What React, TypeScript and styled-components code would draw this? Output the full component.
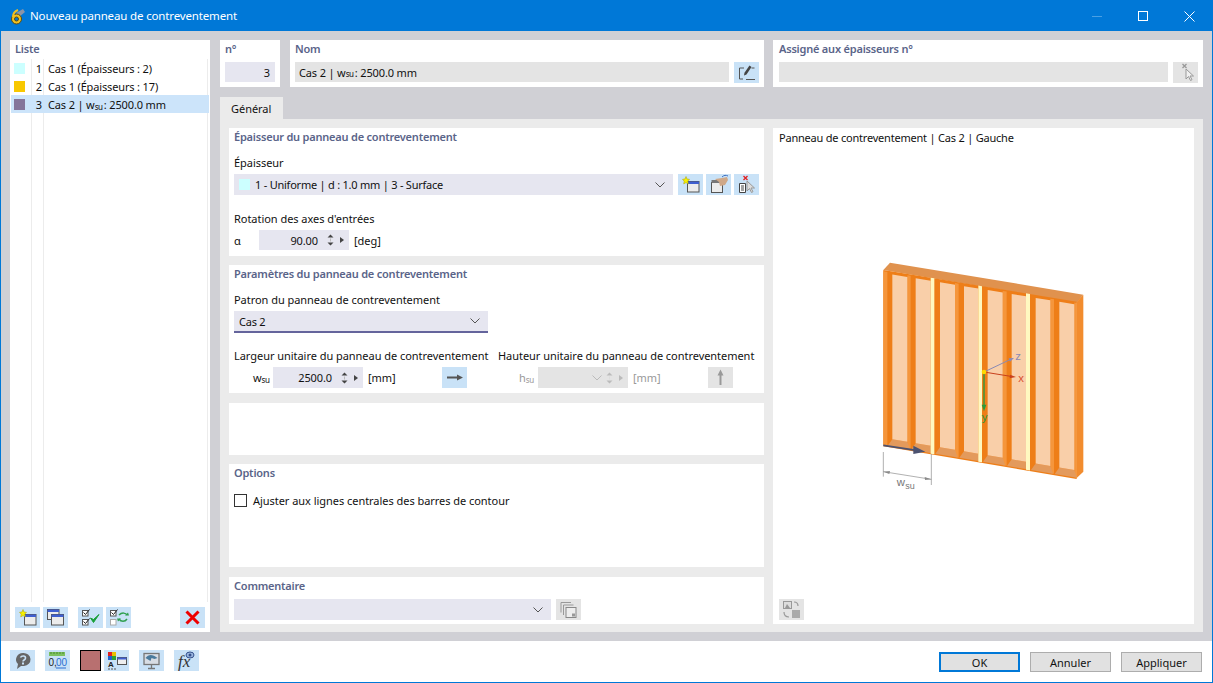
import React from "react";
import styled, { createGlobalStyle } from "styled-components";

const GlobalStyle = createGlobalStyle`
  html, body { margin: 0; padding: 0; background: #fff; }
  * { box-sizing: border-box; }
`;

const Win = styled.div`
  width: 1213px;
  height: 683px;
  border: 1px solid #0078d7;
  background: #d0d0d5;
  display: flex;
  flex-direction: column;
  font-family: "Noto Sans", "Open Sans", sans-serif;
  font-size: 11px;
  letter-spacing: -0.04px;
  color: #111;
  overflow: hidden;
`;

const TitleBar = styled.div`
  height: 30px;
  flex: none;
  background: #0078d7;
  color: #fff;
  display: flex;
  align-items: center;
  padding-left: 8px;
  font-size: 11.5px;
  letter-spacing: -0.15px;
`;

const TitleText = styled.span`
  margin-left: 4px;
  flex: 1;
  margin-top: -1px;
`;

const WinControl = styled.div`
  width: 46px;
  height: 30px;
  display: flex;
  align-items: center;
  justify-content: center;
`;

const Main = styled.div`
  flex: 1;
  display: flex;
  gap: 10px;
  padding: 9px 0 0 9px;
  min-height: 0;
`;

const Sidebar = styled.div`
  width: 200px;
  height: 592px;
  background: #fff;
  display: flex;
  flex-direction: column;
`;

const Heading = styled.div<{ $muted?: boolean }>`
  height: 18px;
  line-height: 18px;
  font-weight: 600;
  font-size: 11px;
  letter-spacing: -0.21px;
  color: #5a6489;
  padding-left: ${(p) => (p.$muted ? 0 : 5)}px;
  white-space: nowrap;
`;

const List = styled.div`
  margin-top: 1px;
  height: 543px;
  background:
    linear-gradient(#ececec, #ececec) 21px 0 / 1px 100% no-repeat,
    linear-gradient(#ececec, #ececec) 33px 0 / 1px 100% no-repeat,
    linear-gradient(#ececec, #ececec) 197px 0 / 1px 100% no-repeat;
`;

const Row = styled.div<{ $active?: boolean }>`
  height: 18px;
  width: 198px;
  margin-left: 1px;
  display: flex;
  align-items: center;
  letter-spacing: -0.15px;
  background: ${(p) => (p.$active ? "#cce4fa" : "transparent")};
  white-space: nowrap;
`;

const RowSwatch = styled.span<{ $color: string }>`
  width: 11px;
  height: 11px;
  margin-left: 3px;
  background: ${(p) => p.$color};
`;

const RowNum = styled.span`
  width: 17px;
  text-align: right;
  flex: none;
`;

const RowName = styled.span`
  margin-left: 6px;
`;

const Sub = styled.span`
  font-size: 8px;
  letter-spacing: -0.4px;
  margin-right: -1.5px;
  position: relative;
  top: 1px;
`;

const SideTools = styled.div`
  margin-top: 5px;
  display: flex;
  padding-left: 5px;
`;

const IconBtn = styled.button<{ $off?: boolean; $ml?: number }>`
  width: 25px;
  height: 21px;
  flex: none;
  padding: 0;
  border: 0;
  margin-left: ${(p) => p.$ml ?? 0}px;
  background: ${(p) => (p.$off ? "#e4e4e4" : "#c9e2f7")};
  display: flex;
  align-items: center;
  justify-content: center;
`;

const Content = styled.div`
  width: 983px;
  display: flex;
  flex-direction: column;
`;

const TopRow = styled.div`
  display: flex;
  height: 47px;
`;

const TopCard = styled.div<{ $w: number; $ml: number; $pl?: number }>`
  width: ${(p) => p.$w}px;
  margin-left: ${(p) => p.$ml}px;
  background: #fff;
  padding: 0 5px 0 ${(p) => p.$pl ?? 5}px;
`;

const InputRow = styled.div<{ $mt?: number }>`
  display: flex;
  align-items: center;
  margin-top: ${(p) => p.$mt ?? 4}px;
`;

const Field = styled.div<{ $w?: number; $off?: boolean; $right?: boolean }>`
  width: ${(p) => (p.$w ? `${p.$w}px` : "auto")};
  flex: ${(p) => (p.$w ? "none" : 1)};
  align-self: flex-start;
  height: 20px;
  background: ${(p) => (p.$off ? "#e4e4e4" : "#e6e6f0")};
  display: flex;
  align-items: center;
  justify-content: ${(p) => (p.$right ? "flex-end" : "flex-start")};
  padding: 0 5px 0 4px;
  letter-spacing: -0.15px;
  white-space: pre;
`;

const Tab = styled.div`
  margin-top: 10px;
  width: 63px;
  height: 22px;
  background: #ebebeb;
  padding-left: 11px;
  line-height: 23px;
`;

const TabPanel = styled.div`
  height: 513px;
  background: #ebebeb;
  padding: 9px 9px 8px;
  display: flex;
  gap: 9px;
`;

const LeftCol = styled.div`
  width: 535px;
  display: flex;
  flex-direction: column;
`;

const Section = styled.div<{ $h: number; $mt?: number }>`
  height: ${(p) => p.$h}px;
  margin-top: ${(p) => p.$mt ?? 0}px;
  background: #fff;
  padding: 0 5px;
  flex: none;
`;

const Label = styled.div<{ $mt: number }>`
  height: 18px;
  line-height: 18px;
  margin-top: ${(p) => p.$mt}px;
  white-space: nowrap;
`;

const ToolGroup = styled.div`
  display: flex;
  gap: 3px;
  margin-left: 5px;
`;

const SelectBox = styled.div<{ $w?: number; $underline?: boolean }>`
  width: ${(p) => (p.$w ? `${p.$w}px` : "auto")};
  flex: ${(p) => (p.$w ? "none" : 1)};
  height: ${(p) => (p.$underline ? 22 : 21)}px;
  background: #e6e6f0;
  display: flex;
  align-items: center;
  padding: 0 8px 0 5px;
  letter-spacing: -0.23px;
  border-bottom: ${(p) => (p.$underline ? "2px solid #64649c" : "0")};
`;

const Swatch = styled.span`
  width: 11px;
  height: 11px;
  background: #ccffff;
  margin-right: 5px;
`;

const Grow = styled.span`
  flex: 1;
`;

const Symbol = styled.span<{ $w: number; $off?: boolean; $pl?: number }>`
  width: ${(p) => p.$w}px;
  padding-left: ${(p) => p.$pl ?? 0}px;
  flex: none;
  color: ${(p) => (p.$off ? "#999" : "#111")};
`;

const Spin = styled.div<{ $w: number; $off?: boolean; $h?: number }>`
  width: ${(p) => p.$w}px;
  height: ${(p) => p.$h ?? 20}px;
  flex: none;
  background: ${(p) => (p.$off ? "#e4e4e4" : "#e6e6f0")};
  display: flex;
  align-items: center;
  justify-content: flex-end;
`;

const SpinValue = styled.span`
  margin-right: 5px;
  letter-spacing: -0.1px;
`;

const Unit = styled.span<{ $off?: boolean }>`
  margin-left: 5px;
  color: ${(p) => (p.$off ? "#999" : "#111")};
`;

const DimCols = styled.div`
  display: flex;
  margin-top: 14px;
`;

const DimCol = styled.div<{ $w: number }>`
  width: ${(p) => p.$w}px;
  flex: none;
`;

const CheckRow = styled.label`
  display: flex;
  align-items: center;
  height: 20px;
  margin-top: 8px;
`;

const CheckBox = styled.span`
  width: 13px;
  height: 13px;
  border: 1px solid #333;
  background: #fff;
  margin: 1px 6px 0 0;
`;

const Preview = styled.div`
  width: 421px;
  height: 496px;
  background: #fff;
  display: flex;
  flex-direction: column;
  padding: 1px 6px 4px;
`;

const PreviewTitle = styled.div`
  height: 18px;
  line-height: 18px;
  letter-spacing: -0.21px;
`;

const Drawing = styled.svg`
  display: block;
  margin: 103px 0 0 81px;
  flex: none;
`;

const PreviewTools = styled.div`
  margin-top: auto;
`;

const Footer = styled.div`
  height: 41px;
  margin-top: 9px;
  flex: none;
  background: #fff;
  display: flex;
  align-items: flex-start;
  padding: 9px 10px 0 9px;
`;

const ColorChip = styled.div`
  width: 21px;
  height: 21px;
  margin-left: 10px;
  border: 1px solid #000;
  background: #b87070;
`;

const DlgBtn = styled.button<{ $primary?: boolean }>`
  width: 81px;
  height: 20px;
  margin: 2px 0 0 10px;
  padding: 0;
  background: #e1e1e1;
  border: ${(p) => (p.$primary ? "2px solid #0078d7" : "1px solid #adadad")};
  font: inherit;
  color: #111;
`;

const Chevron = ({ off }: { off?: boolean }) => (
  <svg width="10" height="6" viewBox="0 0 10 6">
    <path d="M.5.5 5 5 9.500.5" fill="none" stroke={off ? "#bbb" : "#555"} />
  </svg>
);

const Stepper = ({ off }: { off?: boolean }) => {
  const c = off ? "#bbb" : "#444";
  return (
    <svg width="26" height="16" viewBox="0 0 26 16">
      <path d="M4.500 5.500 7.500 2.500 10.500 5.500z M4.500 10.500h6L7.500 13.500z" fill={c} />
      <path d="M7.500 6.500v3" stroke={off ? "#ddd" : "#bbb"} />
      <path d="M17 5 21 8 17 11z" fill={c} />
    </svg>
  );
};

const Win1 = ({ x, y, w, h }: { x: number; y: number; w: number; h: number }) => (
  <g>
    <rect x={x} y={y} width={w} height={h} fill="#ececec" stroke="#555" />
    <rect x={x} y={y} width={w} height={2.500} fill="#3f5fd0" />
  </g>
);

const NewIcon = () => (
  <svg width="25" height="21" viewBox="0 0 25 21">
    <Win1 x={9.500} y={7.500} w={11.500} h={10.500} />
    <path d="M8 2.500l1 2.500 2.500.3L9.800 7.200l.5 2.700L8 8.600 5.700 9.900l.5-2.700-1.700-1.900L7 5z" fill="#f6f000" stroke="#a89c00" strokeWidth=".5" />
  </svg>
);

const CopyIcon = () => (
  <svg width="25" height="21" viewBox="0 0 25 21">
    <Win1 x={4.500} y={2.500} w={11.500} h={10} />
    <Win1 x={8.500} y={7.500} w={12} h={10.500} />
  </svg>
);

const Tick = ({ x, y, on }: { x: number; y: number; on: boolean }) => (
  <g>
    <rect x={x} y={y} width={5.500} height={5.500} fill="#fff" stroke={on ? "#555" : "#aaa"} />
    {on && <path d={`M${x + 1} ${y + 2}l2 2 4-5`} fill="none" stroke="#222" />}
  </g>
);

const CheckAllIcon = () => (
  <svg width="25" height="21" viewBox="0 0 25 21">
    <Tick x={4.500} y={3.500} on />
    <Tick x={4.500} y={12.500} on />
    <path d="M12.500 11l3 4.500 5.500-8-5.500 5z" fill="#18a038" stroke="#18a038" />
  </svg>
);

const CheckSwapIcon = () => (
  <svg width="25" height="21" viewBox="0 0 25 21">
    <Tick x={4.500} y={3.500} on />
    <Tick x={4.500} y={12.500} on={false} />
    <path d="M13 8c3-3 7-2 8 0M21 12c-2 3-6 3-8 0" fill="none" stroke="#30a050" strokeWidth="1.500" />
    <path d="M19 8.500h4l-1-3zM15 11.500h-4l1 3z" fill="#30a050" />
  </svg>
);

const RedX = () => (
  <svg width="25" height="21" viewBox="0 0 25 21">
    <path d="M6.500 4.500 18.500 16.500M18.500 4.500 6.500 16.500" stroke="#ee0000" strokeWidth="3" />
  </svg>
);

const EditIcon = () => (
  <svg width="25" height="21" viewBox="0 0 25 21">
    <path d="M10 6H5.500v11H9M12 17.500h9M17.500 6h3" fill="none" stroke="#555" />
    <path d="M15.500 3.500 17.500 5l-5 7.500-2.500 1 .5-2.800z" fill="#444" />
  </svg>
);

const CursorX = ({ doc }: { doc?: boolean }) => (
  <svg width="25" height="21" viewBox="0 0 25 21">
    {doc && <path d="M5.500 9.500h6v9h-6zM7 12h3M7 14h3M7 16h3" fill="#fff" stroke="#444" />}
    <path d="M13 7v10l2.500-2.500 2 4 1.500-.8-2-3.700h3.500z" fill={doc ? "#ddd" : "#f0f0f0"} stroke="#999" />
    <path d="M9.500 2l4 4M13.500 2l-4 4" stroke={doc ? "#e02020" : "#999"} strokeWidth="1.300" />
  </svg>
);

const HandIcon = () => (
  <svg width="25" height="21" viewBox="0 0 25 21">
    <rect x="5.500" y="8.500" width="11" height="10" fill="#ececec" stroke="#555" />
    <rect x="5.500" y="6" width="11" height="3" fill="#777" />
    <path d="M9 5l7-1 5-1 1 3-3 5-5 1-1-4z" fill="#cfa888" />
    <path d="M16 3c2-2 4-2 6-1" fill="none" stroke="#3f70c0" />
  </svg>
);

const ArrowRight = () => (
  <svg width="25" height="21" viewBox="0 0 25 21">
    <path d="M5 9.500h10V7.500l6 3-6 3v-2H5z" fill="#555" />
  </svg>
);

const ArrowUp = () => (
  <svg width="25" height="21" viewBox="0 0 25 21">
    <path d="M11.500 18V8.500h-2l3-6 3 6h-2V18z" fill="#999" />
  </svg>
);

const GreyCopy = () => (
  <svg width="25" height="21" viewBox="0 0 25 21">
    <path d="M5 3.500h10M5 3.500v10M7.500 6h10M7.500 6v10" fill="none" stroke="#999" />
    <rect x="10" y="8.500" width="10" height="10" fill="#eee" stroke="#888" />
    <rect x="16" y="14.500" width="3" height="3" fill="#999" />
  </svg>
);

const SwapView = () => (
  <svg width="25" height="21" viewBox="0 0 25 21">
    <rect x="4.500" y="2.500" width="8" height="7" fill="#ddd" stroke="#999" />
    <path d="M6 9l2-4 3 4z" fill="#999" />
    <rect x="13" y="11" width="8" height="8" fill="#aaa" />
    <path d="M15 3c2 0 4 1 4 4M5 13c0 3 2 5 5 5" fill="none" stroke="#999" strokeWidth="1.200" />
  </svg>
);

const HelpIcon = () => (
  <svg width="25" height="21" viewBox="0 0 25 21">
    <path d="M13 3a7 6.500 0 0 1 1 13H11l-4 3 1-5a7 6.500 0 0 1 5-11z" fill="#666" />
    <path d="M10.500 7.500c1-2 5-2 5 .5 0 2-2.500 2-2.500 3.500" fill="none" stroke="#c9e2f7" strokeWidth="1.600" />
    <rect x="12" y="12.500" width="2" height="2" fill="#c9e2f7" />
  </svg>
);

const DecimalIcon = () => (
  <svg width="25" height="21" viewBox="0 0 25 21">
    <rect x="4" y="2" width="16" height="4" fill="#7cc060" />
    <path d="M6 2v2M9 2v2M12 2v2M15 2v2M18 2v2" stroke="#4a8a30" />
    <text x="3.500" y="16" fontFamily="Liberation Sans, sans-serif" fontSize="10" fill="#222">0,</text>
    <text x="11" y="16" fontFamily="Liberation Sans, sans-serif" fontSize="10" fill="#2a6fd0">00</text>
    <path d="M11 18h10" stroke="#2a6fd0" />
  </svg>
);

const ColorsIcon = () => (
  <svg width="25" height="21" viewBox="0 0 25 21">
    <rect x="4" y="2" width="4" height="4" fill="#e02020" />
    <rect x="8" y="2" width="4" height="4" fill="#e8c000" />
    <rect x="4" y="6" width="4" height="4" fill="#2060d0" />
    <rect x="8" y="6" width="4" height="4" fill="#30a030" />
    <text x="4" y="17" fontFamily="Liberation Sans, sans-serif" fontWeight="700" fontSize="8" fill="#222">A</text>
    <path d="M4 19h9" stroke="#555" strokeDasharray="2 1" />
    <rect x="13.500" y="7.500" width="9" height="7" fill="#eee" stroke="#555" />
    <rect x="13.500" y="7.500" width="9" height="2" fill="#3f5fd0" />
  </svg>
);

const MonitorIcon = () => (
  <svg width="25" height="21" viewBox="0 0 25 21">
    <rect x="5" y="3.500" width="15" height="11" fill="#d8dde4" stroke="#777" strokeWidth="1.300" />
    <path d="M6.500 8c3-4 7-4 12 0l-3 1-3-1-1 3z" fill="#4a7a9c" />
    <path d="M12.500 15v3M9 18.500h7" stroke="#777" strokeWidth="1.300" />
  </svg>
);

const FxIcon = () => (
  <svg width="25" height="21" viewBox="0 0 25 21">
    <text x="4" y="17" fontFamily="Liberation Serif, serif" fontStyle="italic" fontSize="17" fill="#333">fx</text>
    <ellipse cx="16" cy="5" rx="4" ry="3" fill="#9cb8e0" stroke="#34508c" />
    <circle cx="16" cy="5" r="1.500" fill="#34508c" />
  </svg>
);

const AppLogo = () => (
  <svg width="17" height="17" viewBox="0 0 17 17">
    <path d="M7 5 14 1l2 3-6 5z" fill="#8a94a8" />
    <circle cx="7.500" cy="11" r="5" fill="#f0c020" stroke="#5a4a10" />
    <circle cx="7.500" cy="11" r="2" fill="#0078d7" stroke="#5a4a10" />
    <path d="M4 9c0-4 2-6 5-7" fill="none" stroke="#f0c020" strokeWidth="2" />
  </svg>
);

// wall drawing, in 3x coordinates of the crop
const topY = (x: number) => 60 + (x - 70) * 0.1638;
const botY = (x: number) => 585 + (x - 70) * 0.169;
const band = (a: number, b: number, t = 0, u = 0) =>
  `${a},${topY(a) + t} ${b},${topY(b) + t} ${b},${botY(b) - u} ${a},${botY(a) - u}`;

const panes = [
  [97, 142], [167, 212], [240, 285], [312, 355], [383, 428],
  [455, 498], [527, 571], [598, 643],
];
const lights = [[70, 82], [142, 152], [285, 296], [428, 440], [571, 582], [643, 650]];
const creams = [[212, 223], [355, 366], [498, 510]];

const Wall = () => (
  <Drawing width="240" height="250" viewBox="0 0 720 750">
    <polygon points="70,60 90,38 670,134 650,158" fill="#e0924e" />
    <polygon points="650,156 670,134 670,665 650,684" fill="#f28c2e" />
    <polygon points={band(70, 650, 0, -4)} fill="#ee7e18" />
    {lights.map(([a, b]) => (
      <polygon key={a} points={band(a, b, 4)} fill="#f5963c" />
    ))}
    {panes.map(([a, b]) => (
      <g key={a}>
        <polygon
          points={`${a},${botY(a) - 22} ${b},${botY(b) - 22} ${b + 8},${botY(b + 8)} ${a - 14},${botY(a - 14)}`}
          fill="#e39a5c"
        />
        <polygon points={band(a, b, 9, 22)} fill="#f9cfa9" />
      </g>
    ))}
    {creams.map(([a, b]) => (
      <polygon key={a} points={band(a, b, 0, -2)} fill="#fff8c0" />
    ))}
    <path d="M372 366 452 328" stroke="#8a8ab4" strokeWidth="3" />
    <polygon points="462,324 446,325 450,335" fill="#8a8ab4" />
    <path d="M372 366 452 379" stroke="#c8401c" strokeWidth="3" />
    <polygon points="468,381 450,374 449,385" fill="#c8401c" />
    <path d="M372 366V466" stroke="#2a9a3c" strokeWidth="4" />
    <polygon points="372,484 365,464 379,464" fill="#2a9a3c" />
    <circle cx="372" cy="366" r="7" fill="#ffd800" />
    <text x="466" y="330" fontFamily="Liberation Sans, sans-serif" fontSize="34" fill="#8a8ab4">z</text>
    <text x="475" y="396" fontFamily="Liberation Sans, sans-serif" fontSize="34" fill="#d85030">x</text>
    <text x="365" y="514" fontFamily="Liberation Sans, sans-serif" fontSize="34" fill="#2a9a3c">y</text>
    <path d="M70 586 170 601" stroke="#4c5270" strokeWidth="5" />
    <polygon points="196,605 160,587 160,612" fill="#4c5270" />
    <path d="M70 606V680M214 612V705M70 665 214 688" stroke="#8a8a8a" strokeWidth="2" fill="none" />
    <polygon points="70,665 90,663 88,672" fill="#8a8a8a" />
    <polygon points="214,688 194,681 195,690" fill="#8a8a8a" />
    <text x="110" y="708" fontFamily="Liberation Sans, sans-serif" fontSize="34" fill="#777">w</text>
    <text x="136" y="716" fontFamily="Liberation Sans, sans-serif" fontSize="27" fill="#777">su</text>
  </Drawing>
);

export default function App() {
  return (
    <>
      <GlobalStyle />
      <Win>
        <TitleBar>
          <AppLogo />
          <TitleText>Nouveau panneau de contreventement</TitleText>
          <WinControl>
            <svg width="10" height="1"><path d="M0 .5h10" stroke="#4aa0e4" /></svg>
          </WinControl>
          <WinControl>
            <svg width="10" height="10"><rect x=".5" y=".5" width="9" height="9" fill="none" stroke="#fff" /></svg>
          </WinControl>
          <WinControl>
            <svg width="11" height="11"><path d="M.5.5l10 10M10.500.5l-10 10" stroke="#fff" /></svg>
          </WinControl>
        </TitleBar>

        <Main>
          <Sidebar>
            <Heading>Liste</Heading>
            <List>
              <Row>
                <RowSwatch $color="#ccffff" />
                <RowNum>1</RowNum>
                <RowName>Cas 1 (Épaisseurs : 2)</RowName>
              </Row>
              <Row>
                <RowSwatch $color="#f8c800" />
                <RowNum>2</RowNum>
                <RowName>Cas 1 (Épaisseurs : 17)</RowName>
              </Row>
              <Row $active>
                <RowSwatch $color="#85759a" />
                <RowNum>3</RowNum>
                <RowName>Cas 2 | w<Sub>su</Sub> : 2500.0 mm</RowName>
              </Row>
            </List>
            <SideTools>
              <IconBtn><NewIcon /></IconBtn>
              <IconBtn $ml={3}><CopyIcon /></IconBtn>
              <IconBtn $ml={10}><CheckAllIcon /></IconBtn>
              <IconBtn $ml={3}><CheckSwapIcon /></IconBtn>
              <IconBtn $ml={49}><RedX /></IconBtn>
            </SideTools>
          </Sidebar>

          <Content>
            <TopRow>
              <TopCard $w={60} $ml={0}>
                <Heading $muted>n°</Heading>
                <InputRow>
                  <Field $w={50} $right>3</Field>
                </InputRow>
              </TopCard>
              <TopCard $w={474} $ml={10}>
                <Heading $muted>Nom</Heading>
                <InputRow>
                  <Field $off>Cas 2 | w<Sub>su</Sub> : 2500.0 mm</Field>
                  <IconBtn $ml={5}><EditIcon /></IconBtn>
                </InputRow>
              </TopCard>
              <TopCard $w={430} $ml={9} $pl={6}>
                <Heading $muted>Assigné aux épaisseurs n°</Heading>
                <InputRow>
                  <Field $off />
                  <IconBtn $off $ml={5}><CursorX /></IconBtn>
                </InputRow>
              </TopCard>
            </TopRow>

            <Tab>Général</Tab>
            <TabPanel>
              <LeftCol>
                <Section $h={128}>
                  <Heading $muted>Épaisseur du panneau de contreventement</Heading>
                  <Label $mt={8}>Épaisseur</Label>
                  <InputRow $mt={2}>
                    <SelectBox>
                      <Swatch />
                      1 - Uniforme | d : 1.0 mm | 3 - Surface
                      <Grow />
                      <Chevron />
                    </SelectBox>
                    <ToolGroup>
                      <IconBtn><NewIcon /></IconBtn>
                      <IconBtn><HandIcon /></IconBtn>
                      <IconBtn><CursorX doc /></IconBtn>
                    </ToolGroup>
                  </InputRow>
                  <Label $mt={15}>Rotation des axes d'entrées</Label>
                  <InputRow $mt={2}>
                    <Symbol $w={25}>α</Symbol>
                    <Spin $w={90}>
                      <SpinValue>90.00</SpinValue>
                      <Stepper />
                    </Spin>
                    <Unit>[deg]</Unit>
                  </InputRow>
                </Section>

                <Section $h={128} $mt={9}>
                  <Heading $muted>Paramètres du panneau de contreventement</Heading>
                  <Label $mt={8}>Patron du panneau de contreventement</Label>
                  <InputRow $mt={2}>
                    <SelectBox $w={254} $underline>
                      Cas 2
                      <Grow />
                      <Chevron />
                    </SelectBox>
                  </InputRow>
                  <DimCols>
                    <DimCol $w={264}>
                      <Label $mt={0}>Largeur unitaire du panneau de contreventement</Label>
                      <InputRow $mt={2}>
                        <Symbol $w={39} $pl={19}>w<Sub>su</Sub></Symbol>
                        <Spin $w={90} $h={21}>
                          <SpinValue>2500.0</SpinValue>
                          <Stepper />
                        </Spin>
                        <Unit>[mm]</Unit>
                        <IconBtn $ml={46}><ArrowRight /></IconBtn>
                      </InputRow>
                    </DimCol>
                    <DimCol $w={260}>
                      <Label $mt={0}>Hauteur unitaire du panneau de contreventement</Label>
                      <InputRow $mt={2}>
                        <Symbol $w={40} $pl={21} $off>h<Sub>su</Sub></Symbol>
                        <Spin $w={90} $h={21} $off>
                          <Chevron off />
                          <Stepper off />
                        </Spin>
                        <Unit $off>[mm]</Unit>
                        <IconBtn $off $ml={47}><ArrowUp /></IconBtn>
                      </InputRow>
                    </DimCol>
                  </DimCols>
                </Section>

                <Section $h={52} $mt={10} />

                <Section $h={103} $mt={9}>
                  <Heading $muted>Options</Heading>
                  <CheckRow>
                    <CheckBox />
                    Ajuster aux lignes centrales des barres de contour
                  </CheckRow>
                </Section>

                <Section $h={47} $mt={10}>
                  <Heading $muted>Commentaire</Heading>
                  <InputRow>
                    <SelectBox $w={317}>
                      <Grow />
                      <Chevron />
                    </SelectBox>
                    <IconBtn $off $ml={5}><GreyCopy /></IconBtn>
                  </InputRow>
                </Section>
              </LeftCol>

              <Preview>
                <PreviewTitle>Panneau de contreventement | Cas 2 | Gauche</PreviewTitle>
                <Wall />
                <PreviewTools>
                  <IconBtn $off><SwapView /></IconBtn>
                </PreviewTools>
              </Preview>
            </TabPanel>
          </Content>
        </Main>

        <Footer>
          <IconBtn><HelpIcon /></IconBtn>
          <IconBtn $ml={10}><DecimalIcon /></IconBtn>
          <ColorChip />
          <IconBtn $ml={3}><ColorsIcon /></IconBtn>
          <IconBtn $ml={10}><MonitorIcon /></IconBtn>
          <IconBtn $ml={10}><FxIcon /></IconBtn>
          <Grow />
          <DlgBtn $primary>OK</DlgBtn>
          <DlgBtn>Annuler</DlgBtn>
          <DlgBtn>Appliquer</DlgBtn>
        </Footer>
      </Win>
    </>
  );
}
